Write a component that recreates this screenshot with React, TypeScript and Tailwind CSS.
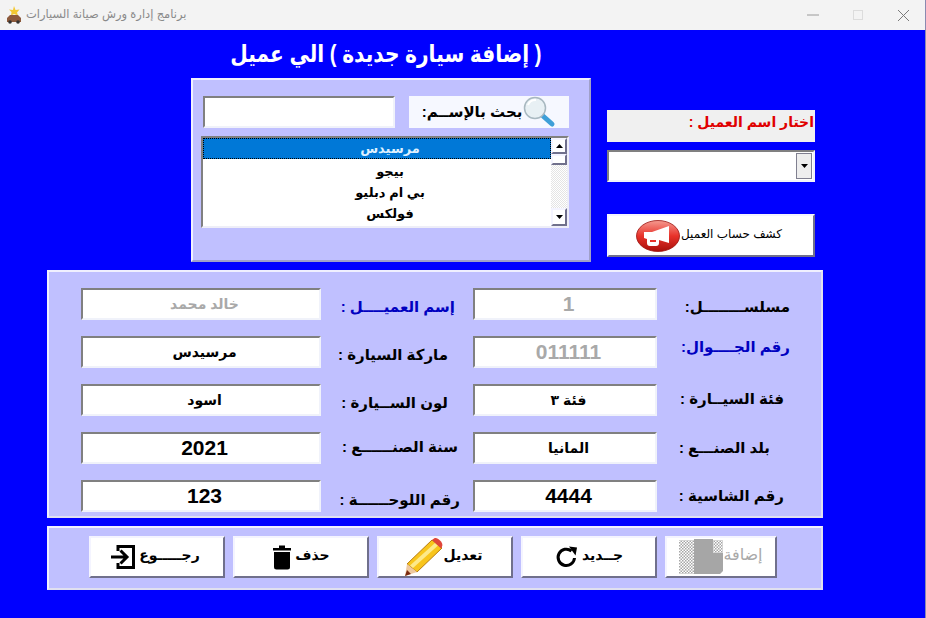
const arabic = "font-['Liberation_Sans','DejaVu_Sans','Noto_Sans',sans-serif]";
const sunken = "border-2 border-t-[#808080] border-l-[#808080] border-r-[#f0f2fa] border-b-[#f0f2fa] bg-white";
const raised = "border-2 border-t-[#f4f4ff] border-l-[#f4f4ff] border-r-[#70708c] border-b-[#70708c] bg-white";

// one entry per row of the form, left pair then right pair
const ROWS = [
  {
    left: { value: "خالد محمد", label: "إسم العميــــل :", cls: "pr-[18px] pt-[6px] text-[#0000c0]", off: true },
    right: { value: "1", label: "مسلســــــــل:", cls: "pr-[31px] pt-[6px] text-black", off: true, big: true },
  },
  {
    left: { value: "مرسيدس", label: "ماركة السيارة :", cls: "pr-[25px] pt-[6px] text-black" },
    right: { value: "011111", label: "رقم الجــــوال:", cls: "pr-[31px] pb-[10px] text-[#0000c0]", off: true, big: true },
  },
  {
    left: { value: "اسود", label: "لون الســيارة :", cls: "pr-[25px] pt-[6px] text-black" },
    right: { value: "فئة ٣", label: "فئة السيــارة :", cls: "pr-[37px] pb-[2px] text-black" },
  },
  {
    left: { value: "2021", label: "سنة  الصنــــــع :", cls: "pr-[15px] pb-[2px] text-black", big: true },
    right: { value: "المانيا", label: "بلد الصنـــع :", cls: "pr-[51px] text-black" },
  },
  {
    left: { value: "123", label: "رقم اللوحــــــة :", cls: "pr-[13px] pt-[8px] text-black", big: true },
    right: { value: "4444", label: "رقم الشاسية :", cls: "pr-[37px] text-black", big: true },
  },
];

type Cell = { value: string; label: string; cls: string; off?: boolean; big?: boolean };

function Field({ cell, width }: { cell: Cell; width: string }) {
  return (
    <div
      dir="rtl"
      className={`${sunken} ${width} h-8 pl-[7px] flex items-center justify-center font-bold ${cell.big ? "text-[21px]" : "text-[14px]"} ${cell.off ? "text-[#a9a9a9]" : "text-black"}`}
    >
      {cell.value}
    </div>
  );
}

function Label({ cell, width }: { cell: Cell; width: string }) {
  return (
    <div dir="rtl" className={`${width} h-8 flex items-center justify-start text-[15px] font-bold whitespace-nowrap ${cell.cls}`}>
      {cell.label}
    </div>
  );
}

function Magnifier() {
  return (
    <svg width="34" height="32" viewBox="0 0 34 32" className="shrink-0">
      <path d="M21 20l9 8" stroke="#3f9fd8" strokeWidth="5" strokeLinecap="round" />
      <circle cx="13" cy="12" r="10.5" fill="#e8f0f4" stroke="#a8b8c0" strokeWidth="1.5" />
      <path d="M6 9a8 8 0 0 1 8-5" stroke="#fff" strokeWidth="2" fill="none" />
    </svg>
  );
}

function Megaphone() {
  return (
    <svg width="44" height="32" viewBox="0 0 44 32" className="shrink-0">
      <defs>
        <linearGradient id="redball" x1="0" y1="0" x2="0" y2="1">
          <stop offset="0" stopColor="#f59a90" />
          <stop offset="0.5" stopColor="#e8322a" />
          <stop offset="1" stopColor="#a80f0a" />
        </linearGradient>
      </defs>
      <ellipse cx="22" cy="16" rx="21.5" ry="15.5" fill="url(#redball)" stroke="#9c1410" strokeWidth="0.8" />
      {/* horn, narrow end left, with the small handle under it */}
      <path d="M8 12h8l17-6v17l-10-3v3c0 2-1 3-3 3h-6c-2 0-3-1-3-3v-4l-3-1z" fill="#fff" />
      <path d="M14 20h6v2h-6z" fill="#e8322a" />
    </svg>
  );
}

function Pencil() {
  return (
    <svg width="40" height="38" viewBox="0 0 40 38" className="shrink-0">
      <path d="M28 2l10 8L13 34 3 26z" fill="#f8c51c" stroke="#b87d10" strokeWidth="1" />
      <path d="M31 5l3 2.5L9 30l-3-2.5z" fill="#fde98a" />
      <path d="M28 2l2-1.5c2-1 4 0 6 2s3 4 2 6l-1 2z" fill="#e0453a" />
      <path d="M3 26l10 8-12 4z" fill="#eec9a0" />
      <path d="M1 38l2-6 4 4z" fill="#7a2a10" />
    </svg>
  );
}

function Trash() {
  return (
    <svg width="20" height="26" viewBox="0 0 20 26" className="shrink-0">
      <path d="M1 4h18v2.5H1z M7 1.5h6V4H7z" fill="#000" />
      <path d="M2 8h16v15a2.5 2.5 0 0 1-2.5 2.5h-11A2.5 2.5 0 0 1 2 23z" fill="#000" />
    </svg>
  );
}

function ExitArrow() {
  return (
    <svg width="26" height="26" viewBox="0 0 26 26" fill="none" stroke="#000" strokeWidth="3" className="shrink-0">
      <path d="M8 7V2.5h15.5v21H8V19" />
      <path d="M1 13h15M10.5 6.5L17 13l-6.5 6.5" />
    </svg>
  );
}

function Refresh() {
  return (
    <svg width="24" height="24" viewBox="0 0 24 24" fill="none" className="shrink-0">
      <path d="M19.5 13a8.2 8.2 0 1 1-3-7" stroke="#000" strokeWidth="3" />
      <path d="M14 1.5l8 1-1.5 8z" fill="#000" />
    </svg>
  );
}

// the greyed out bitmap on the disabled button
function DisabledBitmap() {
  return (
    <svg width="44" height="36" viewBox="0 0 44 36" className="shrink-0">
      <defs>
        <pattern id="speckle" width="3" height="3" patternUnits="userSpaceOnUse">
          <rect width="1.5" height="1.5" fill="#a6a6a6" />
          <rect x="1.5" y="1.5" width="1.5" height="1.5" fill="#a6a6a6" />
        </pattern>
      </defs>
      <rect x="0" y="1" width="16" height="34" fill="url(#speckle)" />
      <rect x="34" y="1" width="10" height="14" fill="url(#speckle)" />
      <path d="M15 0h19v14h10v18l-3 3H15z" fill="#a6a6a6" />
    </svg>
  );
}

function ActionButton({ label, icon, cls, off }: { label: string; icon: React.ReactNode; cls: string; off?: boolean }) {
  return (
    <div className={`${raised} ${cls} h-[42px] flex items-center justify-center`}>
      {icon}
      <span dir="rtl" className={`whitespace-nowrap pb-1 ${off ? "text-[16px] text-[#a9a9a9] font-normal" : "text-[14px] font-bold text-black"}`}>
        {label}
      </span>
    </div>
  );
}

export default function App() {
  return (
    <div className={`${arabic} w-[926px] h-[618px] overflow-hidden flex flex-col bg-[#0000ff] border-r border-[#8a8ab0]`}>
      {/* Title bar */}
      <div className="h-[30px] shrink-0 bg-[#f3f3f3] flex items-center pl-[6px] pr-[16px]">
        <svg width="16" height="18" viewBox="0 0 16 18" className="shrink-0">
          <path d="M8 0l1.5 4 4-.5-2.5 3 1 3-4-1.5-3 1.5 .5-3.5L3 3.5l4 .5z" fill="#f2c832" />
          <path d="M1 12l3-3h8l3 3v4H1z" fill="#8c5a3c" />
          <circle cx="4" cy="16" r="1.8" fill="#333" />
          <circle cx="12" cy="16" r="1.8" fill="#333" />
        </svg>
        <span dir="rtl" className="ml-[4px] text-[11.5px] text-[#8a8a8a]">برنامج إدارة ورش صيانة السيارات</span>
        <div className="ml-auto flex items-center">
          <svg width="12" height="2" viewBox="0 0 12 2"><path d="M0 1h12" stroke="#9a9a9a" strokeWidth="1" /></svg>
          <svg width="10" height="10" viewBox="0 0 10 10" className="ml-[34px]"><rect x="0.5" y="0.5" width="9" height="9" fill="none" stroke="#dcdcdc" /></svg>
          <svg width="11" height="11" viewBox="0 0 11 11" className="ml-[35px]"><path d="M0 0l11 11M11 0L0 11" stroke="#7a7a7a" strokeWidth="1" /></svg>
        </div>
      </div>

      {/* Heading */}
      <div dir="rtl" className="h-[48px] shrink-0 pr-[383px] flex items-center">
        <span className="text-[24px] font-bold text-white whitespace-nowrap scale-x-[0.84] origin-right">( إضافة سيارة جديدة ) الي عميل</span>
      </div>

      {/* Top area */}
      <div className="flex items-start pl-[191px]">
        <div className="w-[400px] h-[184px] border-2 border-t-[#f0f0ff] border-l-[#f0f0ff] border-r-[#a0a0c8] border-b-[#a0a0c8] bg-[#c0c0ff] pl-[8px] pt-[16px]">
          <div className="flex items-stretch h-8 ml-[2px]">
            <div className={`${sunken} w-[192px]`} />
            <div className="ml-[14px] w-[160px] bg-[#f6f8ff] flex items-center justify-center">
              <span dir="rtl" className="text-[15px] font-bold text-black whitespace-nowrap">بحث بالإســم:</span>
              <Magnifier />
            </div>
          </div>
          <div className="mt-2 w-[368px] h-[92px] border-2 border-t-[#808080] border-l-[#808080] border-r-[#eeeef8] border-b-[#eeeef8] bg-white flex overflow-hidden">
            <div dir="rtl" className="w-[348px] text-center text-[13px] font-bold leading-[21px] text-black">
              <div className="h-[21px] pl-[26px] bg-[#0078d7] text-[#dff1ff] outline-1 outline-dotted -outline-offset-1 outline-black">مرسيدس</div>
              <div className="pl-[26px] pt-[2px]">بيجو</div>
              <div className="pl-[26px]">بي ام دبليو</div>
              <div className="pl-[26px]">فولكس</div>
            </div>
            <div className="w-4 flex flex-col bg-[repeating-conic-gradient(#e4e4e4_0_25%,#fff_0_50%)] bg-[length:2px_2px]">
              <div className={`h-4 ${raised} bg-[#f0f0f0] flex items-center justify-center`}>
                <svg width="7" height="4" viewBox="0 0 7 4"><path d="M0 4h7L3.5 0z" fill="#000" /></svg>
              </div>
              <div className={`h-[11px] ${raised} bg-[#f0f0f0]`} />
              <div className={`mt-auto h-[18px] ${raised} bg-[#f0f0f0] flex items-center justify-center`}>
                <svg width="7" height="4" viewBox="0 0 7 4"><path d="M0 0h7L3.5 4z" fill="#000" /></svg>
              </div>
            </div>
          </div>
        </div>

        <div className="ml-[16px] w-[208px] pt-[32px]">
          <div dir="rtl" className="h-8 bg-[#f0f0f0] pr-px pb-2 flex items-center text-[14px] font-bold text-[#e00000] whitespace-nowrap">
            اختار اسم العميل :
          </div>
          <div className={`${sunken} mt-2 h-8 flex justify-end p-px`}>
            <div className="w-4 border border-[#808090] bg-[#eeeeee] flex items-center justify-center">
              <svg width="7" height="4" viewBox="0 0 7 4"><path d="M0 0h7L3.5 4z" fill="#000" /></svg>
            </div>
          </div>
          <div className={`${raised} mt-8 h-[43px] flex items-center pl-[27px] gap-px`}>
            <Megaphone />
            <span dir="rtl" className="text-[12px] font-normal text-black whitespace-nowrap pb-1">كشف حساب العميل</span>
          </div>
        </div>
      </div>

      {/* Form panel */}
      <div className="mt-2 ml-[47px] w-[776px] h-[248px] border-2 border-t-[#f0f0ff] border-l-[#f0f0ff] border-r-[#e0e0f0] border-b-[#e0e0f0] bg-[#c0c0ff] pl-[32px] pt-[16px] flex flex-col gap-4">
        {ROWS.map((row, i) => (
          <div key={i} className="flex">
            <Field cell={row.left} width="w-[240px]" />
            <Label cell={row.left} width="w-[152px]" />
            <Field cell={row.right} width="w-[184px]" />
            <Label cell={row.right} width="w-[164px]" />
          </div>
        ))}
      </div>

      {/* Buttons */}
      <div className="mt-2 ml-[47px] w-[776px] h-[64px] border-2 border-t-[#f0f0ff] border-l-[#f0f0ff] border-r-[#e0e0f0] border-b-[#e0e0f0] bg-[#c0c0ff] pl-[40px] pt-[8px] flex gap-2">
        <ActionButton label="رجـــــوع" icon={<ExitArrow />} cls="w-[136px] gap-[3px] pr-[4px]" />
        <ActionButton label="حذف" icon={<Trash />} cls="w-[136px] gap-[3px]" />
        <ActionButton label="تعديل" icon={<Pencil />} cls="w-[136px] gap-0 pr-[4px]" />
        <ActionButton label="جــديد" icon={<Refresh />} cls="w-[136px] gap-[3px]" />
        <ActionButton label="إضافة" icon={<DisabledBitmap />} cls="w-[112px] gap-0" off />
      </div>
    </div>
  );
}
